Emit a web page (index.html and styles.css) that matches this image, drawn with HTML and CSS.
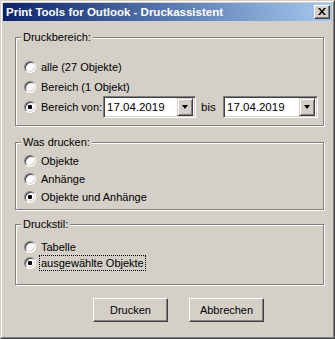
FILE: index.html
```html
<!DOCTYPE html>
<html>
<head>
<meta charset="utf-8">
<link rel="stylesheet" href="styles.css">
</head>
<body>
<div class="window">
  <div class="frame">
    <div class="titlebar">
      <span class="title">Print Tools for Outlook - Druckassistent</span>
      <span class="close"><svg width="8" height="7" viewBox="0 0 8 7"><path d="M0 0h2l2 2.5L6 0h2L5 3.5 8 7H6L4 4.5 2 7H0l3-3.5z" fill="#000"/></svg></span>
    </div>
    <div class="content">
      <div class="group g1">
        <span class="legend">Druckbereich:</span>
        <div class="row r20"><span class="radio"></span><span class="label">alle (27 Objekte)</span></div>
        <div class="row r20"><span class="radio"></span><span class="label">Bereich (1 Objekt)</span></div>
        <div class="row r20">
          <span class="radio checked"></span><span class="label fixed">Bereich von:</span>
          <div class="combo c1"><span class="val">17.04.2019</span><span class="dd"><span class="arrow"></span></span></div>
          <span class="bis">bis</span>
          <div class="combo c2"><span class="val">17.04.2019</span><span class="dd"><span class="arrow"></span></span></div>
        </div>
      </div>
      <div class="group g2">
        <span class="legend">Was drucken:</span>
        <div class="row r18"><span class="radio"></span><span class="label">Objekte</span></div>
        <div class="row r18"><span class="radio"></span><span class="label">Anhänge</span></div>
        <div class="row r18"><span class="radio checked"></span><span class="label">Objekte und Anhänge</span></div>
      </div>
      <div class="group g3">
        <span class="legend">Druckstil:</span>
        <div class="row r16"><span class="radio"></span><span class="label">Tabelle</span></div>
        <div class="row r16"><span class="radio checked"></span><span class="label focus">ausgewählte Objekte</span></div>
      </div>
      <div class="buttons">
        <button class="btn">Drucken</button>
        <button class="btn">Abbrechen</button>
      </div>
    </div>
  </div>
</div>
</body>
</html>
```
FILE: styles.css
```css
html, body {
  margin: 0;
  padding: 0;
  background: #d4d0c8;
}
body {
  font-family: "Liberation Sans", Arial, sans-serif;
  font-size: 11px;
  color: #000;
}
.window {
  width: 335px;
  height: 339px;
  box-sizing: border-box;
  border: 1px solid;
  border-color: #d4d0c8 #404040 #404040 #d4d0c8;
  background: #d4d0c8;
}
.frame {
  height: 100%;
  box-sizing: border-box;
  border: 1px solid;
  border-color: #fff #808080 #808080 #fff;
  padding: 1px;
  display: flex;
  flex-direction: column;
}
.titlebar {
  height: 18px;
  flex: none;
  background: linear-gradient(to right, #0a246a, #a6caf0);
  display: flex;
  align-items: center;
  justify-content: space-between;
  padding: 0 2px 0 3px;
}
.title {
  color: #fff;
  font-weight: bold;
  font-size: 11.5px;
  white-space: nowrap;
}
.close {
  width: 16px;
  height: 14px;
  box-sizing: border-box;
  background: #d4d0c8;
  border: 1px solid;
  border-color: #fff #404040 #404040 #fff;
  box-shadow: inset -1px -1px 0 #808080;
  display: flex;
  align-items: center;
  justify-content: center;
  padding-bottom: 1px;
}
.content {
  flex: 1;
  padding: 16px 8px 0 12px;
  display: flex;
  flex-direction: column;
}
.group {
  position: relative;
  box-sizing: border-box;
  border: 1px solid #808080;
  box-shadow: inset 1px 1px 0 #fff, 1px 1px 0 #fff;
  padding-left: 8px;
  display: flex;
  flex-direction: column;
}
.g1 { height: 89px; padding-top: 19px; }
.g2 { height: 68px; margin-top: 16px; padding-top: 9px; }
.g3 { height: 61px; margin-top: 14px; padding-top: 14px; }
.legend {
  position: absolute;
  left: 5px;
  top: -7px;
  padding: 0 2px;
  background: #d4d0c8;
  line-height: 13px;
}
.row {
  display: flex;
  align-items: center;
  flex: none;
}
.r20 { height: 20px; }
.r18 { height: 18px; }
.r16 { height: 16px; }
.radio {
  width: 12px;
  height: 12px;
  flex: none;
  box-sizing: border-box;
  border-radius: 50%;
  border: 1px solid;
  border-color: #808080 #fff #fff #808080;
  background: #fff;
  box-shadow: inset 1px 1px 0 #404040, inset -1px -1px 0 #d4d0c8;
  display: flex;
  align-items: center;
  justify-content: center;
  margin-right: 5px;
}
.radio.checked::after {
  content: "";
  width: 4px;
  height: 4px;
  border-radius: 1px;
  background: #000;
}
.label {
  white-space: nowrap;
  line-height: 14px;
}
.label.fixed {
  width: 62px;
  flex: none;
}
.label.focus {
  outline: 1px dotted #000;
  outline-offset: 0;
  padding: 0 1px;
  margin-left: -1px;
}
.combo {
  height: 22px;
  flex: none;
  box-sizing: border-box;
  border: 1px solid;
  border-color: #808080 #fff #fff #808080;
  box-shadow: inset 1px 1px 0 #404040, inset -1px -1px 0 #d4d0c8;
  background: #fff;
  display: flex;
  align-items: center;
  justify-content: space-between;
  padding: 2px;
  font-size: 11.5px;
}
.c1 { width: 93px; }
.c2 { width: 95px; }
.val {
  padding-left: 1px;
  white-space: nowrap;
}
.dd {
  width: 16px;
  height: 18px;
  box-sizing: border-box;
  background: #d4d0c8;
  border: 1px solid;
  border-color: #d4d0c8 #404040 #404040 #d4d0c8;
  box-shadow: inset 1px 1px 0 #fff, inset -1px -1px 0 #808080;
  display: flex;
  align-items: center;
  justify-content: center;
}
.arrow {
  width: 0;
  height: 0;
  border-left: 3.5px solid transparent;
  border-right: 3.5px solid transparent;
  border-top: 4px solid #000;
}
.bis {
  width: 22px;
  flex: none;
  padding-left: 5px;
  font-size: 11.5px;
}
.buttons {
  display: flex;
  gap: 21px;
  padding-left: 78px;
  margin-top: 13px;
}
.btn {
  width: 75px;
  height: 24px;
  box-sizing: border-box;
  font-family: "Liberation Sans", Arial, sans-serif;
  font-size: 11px;
  color: #000;
  background: #d4d0c8;
  border: 1px solid;
  border-color: #fff #404040 #404040 #fff;
  box-shadow: inset -1px -1px 0 #808080;
  padding: 0;
  margin: 0;
}
```
